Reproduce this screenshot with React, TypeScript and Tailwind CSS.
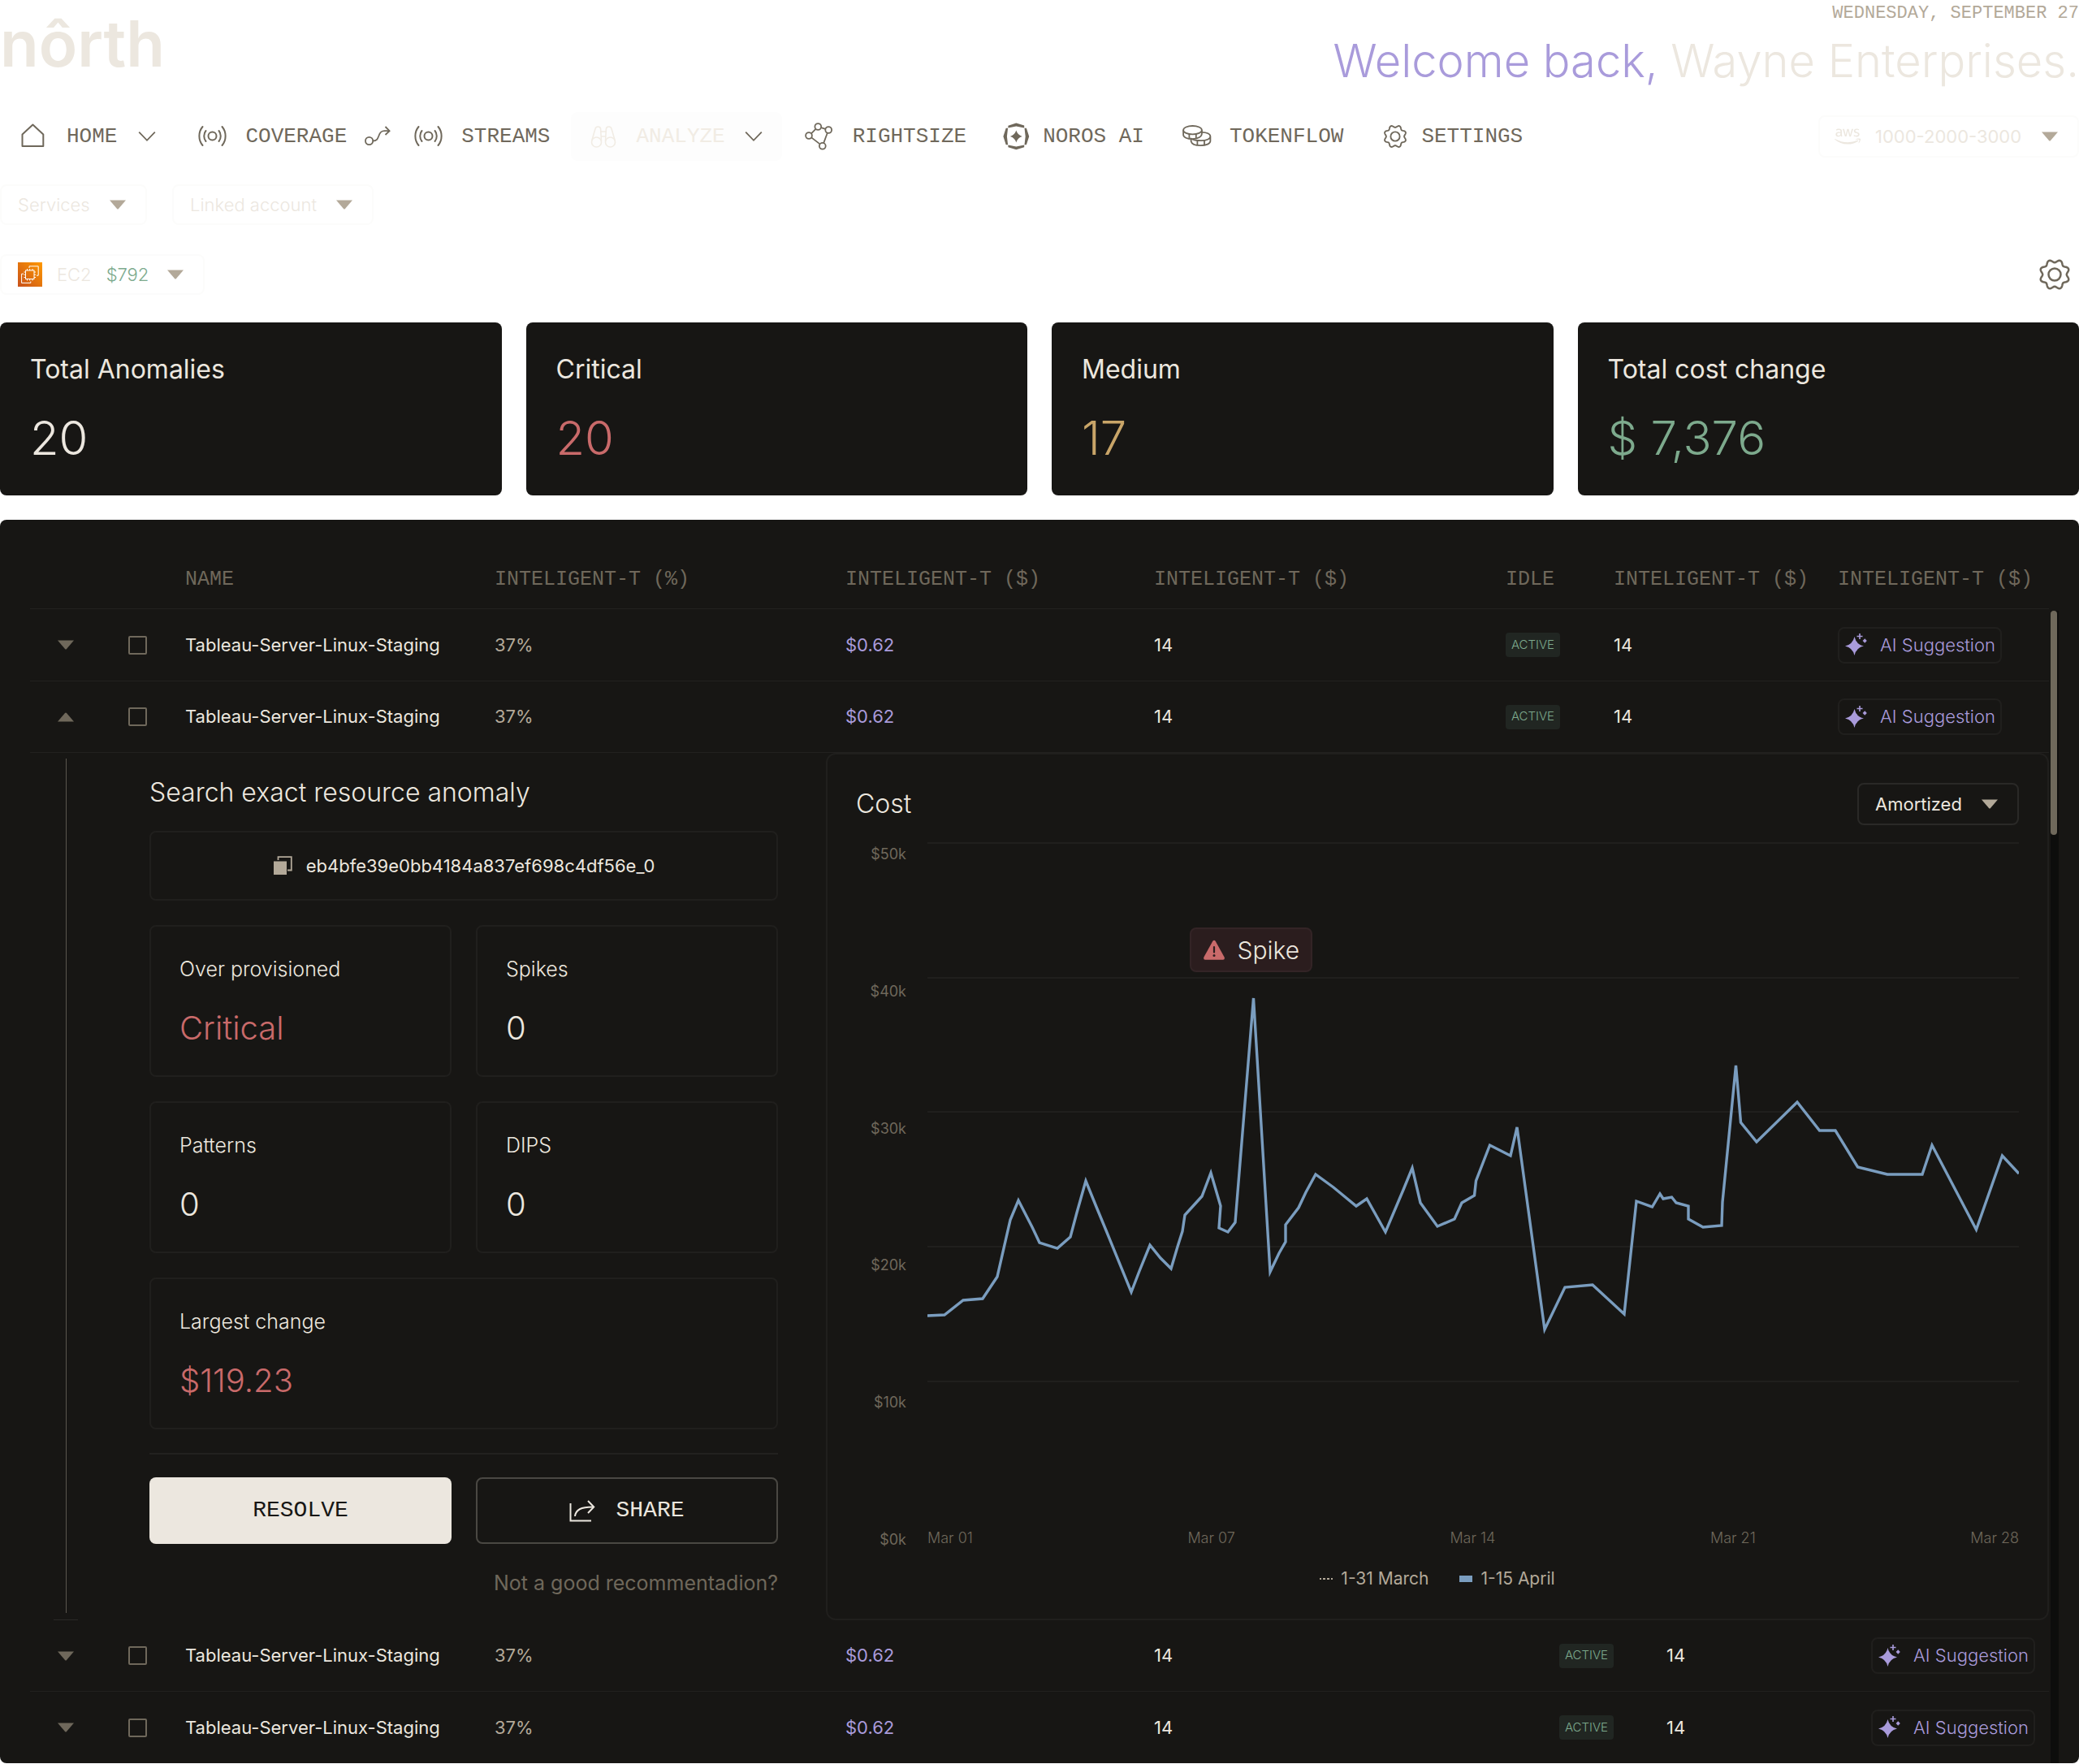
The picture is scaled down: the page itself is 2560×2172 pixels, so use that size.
import React from 'react';
import { FaAws } from 'react-icons/fa';
import { clsx } from 'clsx';

const MONO = "font-['Liberation_Mono',monospace]";

interface IconProps {
  className?: string;
}

const HomeIcon: React.FC<IconProps> = ({ className }) => (
  <svg className={className} width="32" height="32" viewBox="0 0 32 32" fill="none" stroke="currentColor" strokeWidth="2">
    <path d="M3.5 28V13.5L16.4 1.5L29.3 13.5V28Z" strokeLinejoin="round" />
  </svg>
);

const SignalIcon: React.FC<IconProps> = ({ className }) => (
  <svg className={className} width="36" height="32" viewBox="0 0 36 32" fill="none" stroke="currentColor" strokeWidth="2" strokeLinecap="round">
    <circle cx="17.5" cy="15.5" r="5" />
    <path d="M9.5 9C6.5 12.5 6.5 18.5 9.5 22" />
    <path d="M25.5 9C28.5 12.5 28.5 18.5 25.5 22" />
    <path d="M5.5 4C0 10.5 0 20.5 5.5 27" />
    <path d="M29.5 4C35 10.5 35 20.5 29.5 27" />
  </svg>
);

const FlowIcon: React.FC<IconProps> = ({ className }) => (
  <svg className={className} width="32" height="32" viewBox="0 0 32 32" fill="none" stroke="currentColor" strokeWidth="1.8">
    <circle cx="5.6" cy="21.5" r="4.6" />
    <path d="M10.2 21.5C15 21.5 16 19 17.3 15.5C18.6 11.5 20 9.2 24.5 9.2H30" />
    <path d="M25.5 4L30.6 9.2L25.5 14" />
  </svg>
);

const BinocularsIcon: React.FC<IconProps> = ({ className }) => (
  <svg className={className} width="32" height="32" viewBox="0 0 32 32" fill="none" stroke="currentColor" strokeWidth="1.6">
    <circle cx="7.5" cy="23" r="6" />
    <circle cx="24.5" cy="23" r="6" />
    <path d="M1.8 21L6 6.5C6.8 3.2 12 3.2 12.6 6.5L13.5 22" />
    <path d="M30.2 21L26 6.5C25.2 3.2 20 3.2 19.4 6.5L18.5 22" />
    <path d="M12.6 10H19.4M13.2 16H18.8" />
  </svg>
);

const NodesIcon: React.FC<IconProps> = ({ className }) => (
  <svg className={className} width="34" height="34" viewBox="0 0 34 34" fill="none" stroke="currentColor" strokeWidth="1.8">
    <circle cx="5" cy="16" r="3.9" />
    <circle cx="16.3" cy="5" r="3.9" />
    <circle cx="29.2" cy="9" r="3.9" />
    <circle cx="21.8" cy="28.8" r="3.9" />
    <path d="M8 13.4L13.4 7.8M20.2 6.2L25.4 7.8M27.8 12.7L23.2 25.1M8.2 18.4L18.6 26.4" />
  </svg>
);

const NorosIcon: React.FC<IconProps> = ({ className }) => (
  <svg className={className} width="34" height="34" viewBox="0 0 34 34" fill="currentColor">
    <path d="M6.4 3.8L16.3 0.6L26.2 3.5V6.6L16.3 4.6L6.4 6.6Z" />
    <path d="M6.4 30.2L16.3 33.2L26.2 30.2V27.4L16.3 29.4L6.4 27.4Z" />
    <path d="M3.7 6.8H6.1L4.9 17L6.1 27.2H3.7L0.4 17Z" />
    <path d="M28.9 6.8H26.5L27.7 17L26.5 27.2H28.9L32.2 17Z" />
    <path d="M16.3 9.6Q18 15.3 23.7 17Q18 18.7 16.3 24.4Q14.6 18.7 8.9 17Q14.6 15.3 16.3 9.6Z" />
  </svg>
);

const CoinsIcon: React.FC<IconProps> = ({ className }) => (
  <svg className={className} width="36" height="32" viewBox="0 0 36 32" fill="none" stroke="currentColor" strokeWidth="1.8">
    <ellipse cx="12.5" cy="8.2" rx="11.4" ry="5.2" />
    <path d="M1.1 8.2V14C1.1 17 5.8 19.2 12 19.2" />
    <path d="M23.9 8.2V12.6C23.9 16.4 19 19.2 12 19.2" />
    <path d="M8.4 13.2V18.8M16.8 13V18.6" />
    <path d="M24 10.8C30 10.8 34.4 13 34.4 16C34.4 19 29.5 21.2 22.8 21.2C17.5 21.2 12.5 20 10.6 18.8V22C11.4 25.2 16.4 27.2 22.5 27.2C29.4 27.2 34.4 24.8 34.4 21.8V16" />
    <path d="M18.4 21V27M27 21V26.8" />
  </svg>
);

// Wavy cog outline: eight soft lobes around a ring.
const cogPoints = Array.from({ length: 96 }, (_, i) => {
  const a = (i / 96) * Math.PI * 2;
  const r = 13.3 + 1.5 * Math.cos(8 * (a - Math.PI / 8));
  return `${(16 + r * Math.cos(a)).toFixed(2)},${(16 + r * Math.sin(a)).toFixed(2)}`;
}).join(' ');

const CogIcon: React.FC<IconProps> = ({ className }) => (
  <svg className={className} viewBox="0 0 32 32" fill="none" stroke="currentColor" strokeWidth="2" strokeLinejoin="round">
    <polygon points={cogPoints} />
    <circle cx="16" cy="16" r="6" />
  </svg>
);

const ChevronIcon: React.FC<IconProps> = ({ className }) => (
  <svg className={className} width="22" height="14" viewBox="0 0 22 14" fill="none" stroke="currentColor" strokeWidth="1.8">
    <path d="M1.2 1.6L11 11.8L20.8 1.6" />
  </svg>
);

const Caret: React.FC<IconProps> = ({ className }) => (
  <svg className={className} width="22" height="12" viewBox="0 0 22 12" fill="currentColor">
    <path d="M1 0.5H21L12 11Q11 12 10 11Z" />
  </svg>
);

const Ec2Icon = () => (
  <svg width="30" height="30" viewBox="0 0 30 30" fill="none" stroke="#fff" strokeWidth="1">
    <defs>
      <linearGradient id="ec2" x1="0" y1="30" x2="30" y2="0" gradientUnits="userSpaceOnUse">
        <stop offset="0" stopColor="#c8511b" />
        <stop offset="1" stopColor="#ff9900" />
      </linearGradient>
    </defs>
    <rect width="30" height="30" fill="url(#ec2)" stroke="none" />
    <rect x="9.5" y="10" width="10.5" height="10.5" />
    <path d="M11.5 8V10M14.7 8V10M18 8V10M11.5 20.5V22.5M14.7 20.5V22.5M18 20.5V22.5M7.5 12H9.5M7.5 15.2H9.5M7.5 18.5H9.5M20 12H22M20 15.2H22M20 18.5H22" />
    <path d="M14 7V4.8H25.2V16.2H23M7 14.2H4.6V25.4H15.8V23.5" />
  </svg>
);

const SparkleIcon = () => (
  <svg width="30" height="30" viewBox="0 0 30 30" fill="currentColor">
    <path d="M12.5 5Q14.6 14.4 24 16.5Q14.6 18.6 12.5 28Q10.4 18.6 1 16.5Q10.4 14.4 12.5 5Z" />
    <path d="M19 1V8M15.5 4.5H22.5" stroke="currentColor" strokeWidth="1.6" />
    <path d="M25.2 7.2L27.8 10L25.2 12.8L22.6 10Z" />
  </svg>
);

const CopyIcon = () => (
  <svg width="24" height="24" viewBox="0 0 24 24" fill="none">
    <path d="M6.5 5V1.2H22.8V17.5H18" stroke="#b3a999" strokeWidth="1.8" />
    <rect x="1" y="6.5" width="16" height="16.5" fill="#b3a999" />
  </svg>
);

const ShareIcon = () => (
  <svg width="32" height="30" viewBox="0 0 32 30" fill="none" stroke="currentColor" strokeWidth="2">
    <path d="M1.5 6V27.5H27" />
    <path d="M7 22C8 14 14 10.5 29 10.5" />
    <path d="M23 3L30.2 10.5L23 18" />
  </svg>
);

const AlertIcon = () => (
  <svg width="28" height="26" viewBox="0 0 28 26">
    <path d="M12.2 2Q14 -0.6 15.8 2L26.6 21.5Q27.6 24.6 25 24.8H3Q0.4 24.6 1.4 21.5Z" fill="#c96a6a" />
    <path d="M14 9V15.5" stroke="#2b1d1e" strokeWidth="2.2" strokeLinecap="round" />
    <circle cx="14" cy="19.6" r="1.5" fill="#2b1d1e" />
  </svg>
);

interface PickerProps {
  label: string;
  value: string;
  className?: string;
  icon?: React.ReactNode;
}

const Picker: React.FC<PickerProps> = ({ label, value, className, icon }) => (
  <div className="relative flex items-center">
    {icon && <div className="absolute inset-y-0 left-5 flex items-center pointer-events-none">{icon}</div>}
    <select
      aria-label={label}
      className={clsx('block appearance-none rounded-lg border-2 bg-transparent pr-[68px] text-[22px]', className)}
    >
      <option>{value}</option>
    </select>
    <Caret className="pointer-events-none absolute right-[25px] text-[#b3a999]" />
  </div>
);

const navItems = [
  { label: 'HOME', icon: <HomeIcon />, box: 'pl-6', gap: 'gap-[26px]', after: <ChevronIcon /> },
  { label: 'COVERAGE', icon: <SignalIcon />, box: 'pl-[52px]', gap: 'gap-[22px]', after: <FlowIcon /> },
  { label: 'STREAMS', icon: <SignalIcon />, box: 'pl-[29px] pr-[26px]', gap: 'gap-[22px]' },
  { label: 'ANALYZE', icon: <BinocularsIcon />, box: 'px-6 rounded-lg bg-[#fdfdfd]', gap: 'gap-[24px]', after: <ChevronIcon className="text-[#6f685b]" />, active: true },
  { label: 'RIGHTSIZE', icon: <NodesIcon />, box: 'pl-7', gap: 'gap-[25px]' },
  { label: 'NOROS AI', icon: <NorosIcon />, box: 'pl-[45px]', gap: 'gap-[15px]' },
  { label: 'TOKENFLOW', icon: <CoinsIcon />, box: 'pl-[47px]', gap: 'gap-[22px]' },
  { label: 'SETTINGS', icon: <CogIcon className="h-[30px] w-[30px]" />, box: 'pl-[49px]', gap: 'gap-[17px]' },
];

const stats = [
  { label: 'Total Anomalies', value: '20', color: 'text-[#ece7df]' },
  { label: 'Critical', value: '20', color: 'text-[#c96a6a]' },
  { label: 'Medium', value: '17', color: 'text-[#c9a568]' },
  { label: 'Total cost change', value: '$ 7,376', color: 'text-[#7daa8d]' },
];

const headings = ['NAME', 'INTELIGENT-T (%)', 'INTELIGENT-T ($)', 'INTELIGENT-T ($)', 'IDLE', 'INTELIGENT-T ($)', 'INTELIGENT-T ($)'];

const details = [
  { label: 'Over provisioned', value: 'Critical', alert: true },
  { label: 'Spikes', value: '0' },
  { label: 'Patterns', value: '0' },
  { label: 'DIPS', value: '0' },
  { label: 'Largest change', value: '$119.23', alert: true, wide: true },
];

const costPoints =
  '0,583 21,582 44,564 68,562 86,535 102,465 112,441 129,474 138,493 160,500 176,486 184,456 195,417 208,449 220,478 251,554 ' +
  '261,528 274,496 287,512 300,525 308,498 314,479 317,459 338,436 349,407 361,448 359,475 370,480 379,468 401.5,192 422,529 ' +
  '433,506 441,492 441,471 457,450 466,431 478,409 500,425 528,448 541,439 564,480 586,428 597,401 607,444 628,473 649,464 ' +
  '658,444 673.5,435 675.5,417 692.5,373 718,386 726,351 760,600 785,548 819,545 858,581 873,442 892.5,449 902,433 906,439 ' +
  '916.5,437 922,444 937,448 937,464 955,474 978,472 979,443 995.5,275 1001.5,345 1021,369 1071,320 1098.5,355 1118,355 ' +
  '1145.5,400 1182,409 1225,409 1237,373 1291.5,477 1323.5,386 1344,408';

const Row: React.FC<{ id: string; open?: boolean; last?: boolean; tall?: boolean }> = ({ id, open, last, tall }) => {
  const cell = clsx('px-[15px] py-0 text-left', !last && 'border-b border-[#22211f]');
  return (
    <tr className={tall ? 'h-[89px]' : 'h-[88px]'}>
      <td className={clsx('p-0', !last && 'border-b border-[#22211f]')}>
        <button aria-label="Toggle details" aria-expanded={!!open} className="flex w-full justify-center text-[#6f685b]">
          <Caret className={open ? 'rotate-180' : ''} />
        </button>
      </td>
      <td className={clsx('p-0', !last && 'border-b border-[#22211f]')}>
        <input
          type="checkbox"
          id={id}
          aria-label="Select Tableau-Server-Linux-Staging"
          className="mx-auto block h-[23px] w-[23px] appearance-none rounded-[2px] border-2 border-[#6f685b]"
        />
      </td>
      <td className={cell}>
        <label htmlFor={id}>Tableau-Server-Linux-Staging</label>
      </td>
      <td className={clsx(cell, 'text-[#b3a999]')}>37%</td>
      <td className={clsx(cell, 'text-[#a99bdb]')}>$0.62</td>
      <td className={cell}>14</td>
      <td className={cell}>
        <span className="flex h-[30px] w-[67px] items-center justify-center rounded-[4px] bg-[#212622] text-[15px] font-light text-[#7daa8d]">
          ACTIVE
        </span>
      </td>
      <td className={cell}>14</td>
      <td className={cell}>
        <button className="flex h-[45px] items-center gap-[14px] rounded-lg border-2 border-[#201f1d] px-[6px] font-light whitespace-nowrap text-[#a99bdb]">
          <SparkleIcon />
          AI Suggestion
        </button>
      </td>
    </tr>
  );
};

const Detail = () => (
  <section className="flex">
    <div className="flex w-2/5 max-w-[980px]">
      <div className="flex w-[88px] shrink-0 flex-col items-center justify-between">
        <div className="mt-[7px] w-px grow bg-[#5a564e]" />
        <div className="mt-2 h-px w-[30px] bg-[#2a2927]" />
      </div>
      <div className="flex grow flex-col pr-[59px] pl-[59px] pt-[29px]">
        <h2 className="text-[32px] leading-10 font-light">Search exact resource anomaly</h2>
        <div className="mt-[27px] flex h-[86px] items-center justify-center gap-[17px] rounded-lg border-2 border-[#201f1d]">
          <button aria-label="Copy resource id">
            <CopyIcon />
          </button>
          <span>eb4bfe39e0bb4184a837ef698c4df56e_0</span>
        </div>
        <dl className="mt-[30px] grid grid-cols-2 gap-[30px]">
          {details.map(({ label, value, alert, wide }) => (
            <div key={label} className={clsx('rounded-lg border-2 border-[#201f1d] px-[35px] py-[34px]', wide && 'col-span-2')}>
              <dt className="text-[25px] leading-9 font-light">{label}</dt>
              <dd className={clsx('mt-[31px] text-[40px] leading-[48px] font-light', alert && 'text-[#c96a6a]')}>{value}</dd>
            </div>
          ))}
        </dl>
        <hr className="mt-[29px] border-t-2 border-[#22211f]" />
        <div className={clsx('mt-7 grid grid-cols-2 gap-[30px] text-[28px]', MONO)}>
          <button className="h-[82px] rounded-lg bg-[#ece7df] text-[#171614]">RESOLVE</button>
          <button className="flex h-[82px] items-center justify-center gap-[25px] rounded-lg border-2 border-[#4a4843]">
            <ShareIcon />
            SHARE
          </button>
        </div>
        <a href="#feedback" className="mt-[30px] self-end text-[25px] leading-9 text-[#6f685b]">
          Not a good recommentadion?
        </a>
      </div>
    </div>

    <div className="grow rounded-xl border-2 border-[#201f1d] px-[35px] pt-[35px] pb-[35px]">
      <div className="flex items-center justify-between">
        <h2 className="text-[32px] font-light">Cost</h2>
        <Picker label="Cost type" value="Amortized" className="h-[52px] border-[#2a2927] pl-5" />
      </div>
      <div className="mt-[21px] flex h-[873px] gap-[26px] text-[18px] leading-7 text-[#6f685b]">
        <div className="flex w-[62px] flex-col justify-between pt-px text-right">
          {['$50k', '$40k', '$30k', '$20k', '$10k', '$0k'].map((tick) => (
            <span key={tick}>{tick}</span>
          ))}
        </div>
        <div className="relative flex grow flex-col justify-between pb-[2px]">
          <svg className="h-[666px] w-full" viewBox="0 0 1344 666" preserveAspectRatio="none" fill="none">
            {[1, 167, 332, 498, 664].map((y) => (
              <line key={y} x1="0" x2="1344" y1={y} y2={y} stroke="#201f1d" strokeWidth="2" />
            ))}
            <polyline points={costPoints} stroke="#7a9dbf" strokeWidth="3.4" vectorEffect="non-scaling-stroke" />
          </svg>
          <div className="absolute top-[105px] left-[24%] flex h-[55px] items-center gap-[15px] rounded-lg border-2 border-[#332426] bg-[#2b1d1e] px-3.5 text-[30px] font-light text-[#ece7df]">
            <AlertIcon />
            Spike
          </div>
          <div className="flex justify-between font-light">
            {['Mar 01', 'Mar 07', 'Mar 14', 'Mar 21', 'Mar 28'].map((day) => (
              <span key={day}>{day}</span>
            ))}
          </div>
        </div>
      </div>
      <div className="mt-5 flex justify-center gap-[38px] text-[21px] leading-7 text-[#b3a999]">
        <span className="flex items-center gap-[10px]">
          <svg width="16" height="4" viewBox="0 0 16 4" fill="#b3a999">
            <path d="M0 1h2v2H0zM4 1h3v2H4zM9 1h3v2H9zM14 1h2v2h-2z" />
          </svg>
          1-31 March
        </span>
        <span className="flex items-center gap-[10px]">
          <span className="h-2 w-4 bg-[#7a9dbf]" />
          1-15 April
        </span>
      </div>
    </div>
  </section>
);

const App = () => (
  <div className="min-h-screen bg-white font-['Inter',sans-serif] text-[#ece7df]">
    <header className="flex items-start justify-between">
      <a href="#home" className="text-[78px] leading-[108px] font-semibold">
        nôrth
      </a>
      <div className="flex flex-col items-end">
        <p className={clsx('mt-[3px] text-[22px] leading-7 text-[#b3a999]', MONO)}>WEDNESDAY, SEPTEMBER 27</p>
        <h1 className="mt-[9px] text-[56px] leading-[70px] font-light">
          <span className="text-[#a99bdb]">Welcome back,</span> Wayne Enterprises.
        </h1>
      </div>
    </header>

    <div className="mt-7 flex items-center justify-between">
      <nav className={clsx('flex text-[26px] text-[#6f685b]', MONO)}>
        {navItems.map(({ label, icon, box, gap, after, active }) => (
          <a key={label} href={`#${label.toLowerCase()}`} className={clsx('flex h-[60px] items-center', box, gap, active && 'text-[#f1ece4]')}>
            {icon}
            {label}
            {after}
          </a>
        ))}
      </nav>
      <Picker
        label="AWS account"
        value="1000-2000-3000"
        className="h-[52px] border-[#fcfcfb] pl-[68px]"
        icon={<FaAws size={32} />}
      />
    </div>

    <div className="mt-[29px] flex gap-[31px]">
      <Picker label="Services" value="Services" className="h-[50px] border-[#fcfcfb] pl-5 font-light" />
      <Picker label="Linked account" value="Linked account" className="h-[50px] border-[#fcfcfb] pl-5 font-light" />
    </div>

    <div className="mt-9 flex items-center justify-between">
      <button className="flex h-[50px] items-center rounded-lg border-2 border-[#fcfcfb] pr-[23px] pl-5 text-[22px] font-light">
        <Ec2Icon />
        <span className="ml-[18px]">EC2</span>
        <span className="ml-[18px] text-[#7daa8d]">$792</span>
        <Caret className="ml-[22px] text-[#b3a999]" />
      </button>
      <button aria-label="View settings" className="mr-2.5 text-[#6f685b]">
        <CogIcon className="h-[40px] w-[40px]" />
      </button>
    </div>

    <div className="mt-[34px] grid grid-cols-4 gap-[30px]">
      {stats.map(({ label, value, color }) => (
        <div key={label} className="rounded-lg bg-[#171614] px-[37px] pt-[37px] pb-9">
          <p className="text-[32px] leading-[42px]">{label}</p>
          <p className={clsx('mt-[29px] mb-px text-[58px] leading-[68px] font-light', color)}>{value}</p>
        </div>
      ))}
    </div>

    <main className="mt-[30px] flex rounded-lg bg-[#171614] pl-[37px] text-[22px]">
      <div className="grow">
        <table className="w-full table-fixed border-separate border-spacing-0">
          <colgroup>
            <col className="w-[88px]" />
            <col className="w-[88px]" />
            <col className="w-[381px]" />
            <col className="w-[432px]" />
            <col className="w-[380px]" />
            <col />
            <col className="w-[133px]" />
            <col className="w-[276px]" />
            <col className="w-[275px]" />
          </colgroup>
          <thead className={clsx('text-[25px] whitespace-nowrap text-[#6f685b]', MONO)}>
            <tr className="h-[110px]">
              <td className="border-b border-[#22211f] p-0" />
              <td className="border-b border-[#22211f] p-0" />
              {headings.map((heading, i) => (
                <th key={i} className="border-b border-[#22211f] px-[15px] pt-[38px] pb-0 text-left font-normal">
                  {heading}
                </th>
              ))}
            </tr>
          </thead>
          <tbody>
            <Row id="row-1" tall />
            <Row id="row-2" open />
          </tbody>
        </table>
        <Detail />
        <table className="w-full table-fixed border-separate border-spacing-0" aria-label="More anomalies">
          <colgroup>
            <col className="w-[88px]" />
            <col className="w-[88px]" />
            <col className="w-[381px]" />
            <col className="w-[432px]" />
            <col className="w-[380px]" />
            <col />
            <col className="w-[132px]" />
            <col className="w-[252px]" />
            <col className="w-[234px]" />
          </colgroup>
          <tbody>
            <Row id="row-3" />
            <Row id="row-4" last />
          </tbody>
        </table>
      </div>
      {/* scrollbar gutter */}
      <div className="flex w-[37px] shrink-0 pt-[112px] pl-[2px]">
        <div className="w-[10px] bg-[#0d0d0c]">
          <div className="h-[276px] w-2 rounded-full bg-[#6f685b]" />
        </div>
      </div>
    </main>
  </div>
);

export default App;
